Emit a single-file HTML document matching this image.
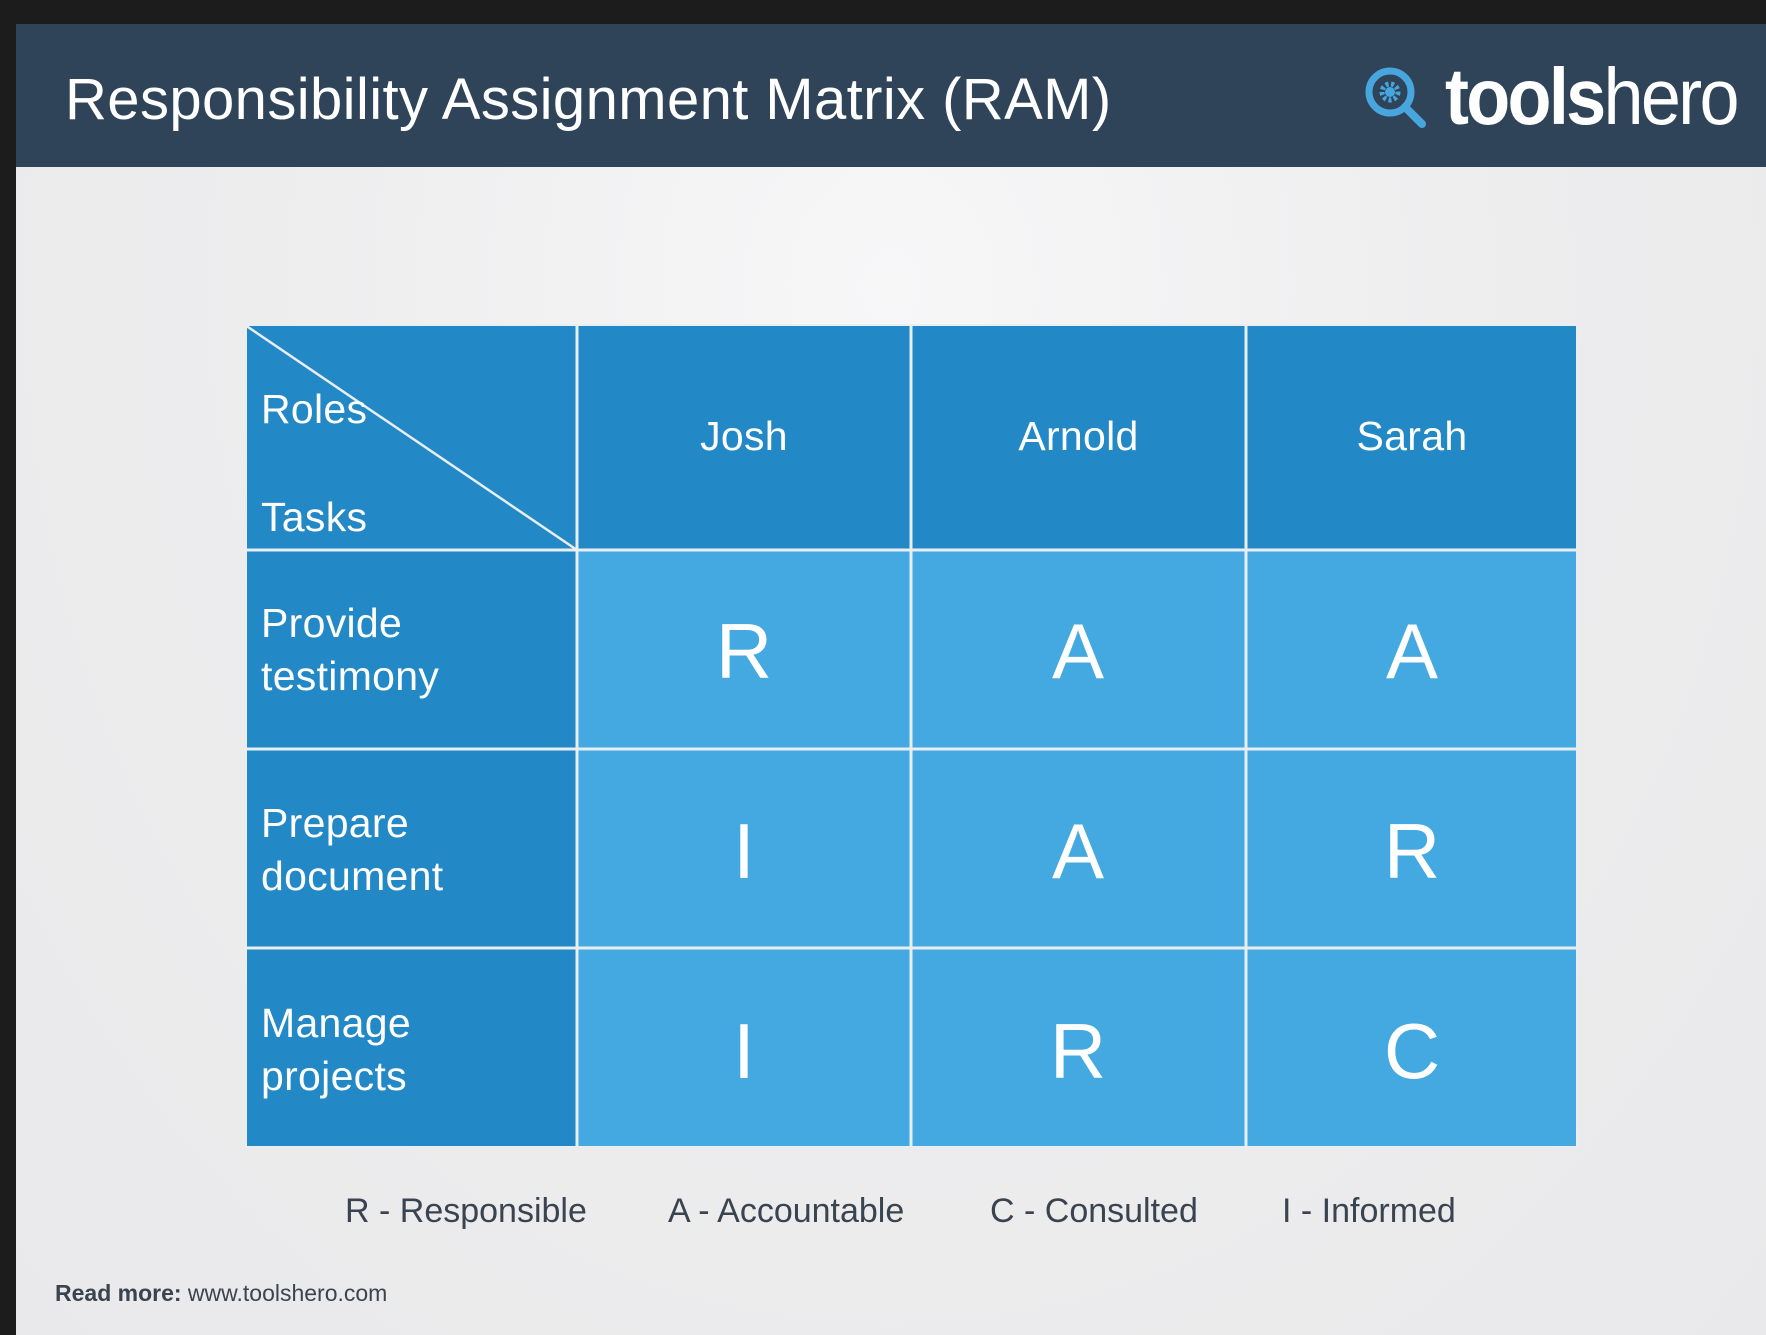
<!DOCTYPE html>
<html><head><meta charset="utf-8"><style>
*{margin:0;padding:0;box-sizing:border-box}
body{width:1766px;height:1335px;overflow:hidden;background:#1c1c1c;font-family:"Liberation Sans",Arial,sans-serif;position:relative}
.page{position:absolute;left:16px;top:24px;right:0;bottom:0;background:radial-gradient(ellipse at 50% 20%,#f7f7f8 0%,#ededee 50%,#e9e9eb 100%)}
.hdr{position:absolute;left:16px;top:24px;right:0;height:143px;background:#2f4459}
.title{position:absolute;left:65px;top:66px;color:#fff;font-size:58px;white-space:nowrap;letter-spacing:0.4px}
.logo{position:absolute;left:1445px;top:57px;color:#fff;font-size:80px;line-height:1;letter-spacing:-3px;white-space:nowrap;transform:scaleX(0.9);transform-origin:left}
.logo b{font-weight:bold}
.t{position:absolute;font-size:41px;color:#fff;white-space:nowrap;letter-spacing:0.3px}
.big{position:absolute;font-size:78px;color:#fff;text-align:center;width:332px}
.lg{position:absolute;top:1192px;font-size:34px;color:#3a4350;white-space:nowrap}
</style></head><body>
<div class="page"></div>
<div class="hdr"></div>
<div class="title">Responsibility Assignment Matrix (RAM)</div>
<svg style="position:absolute;left:1362px;top:64px" width="68" height="68" viewBox="0 0 68 68">
<circle cx="28" cy="28" r="21" fill="none" stroke="#48a6de" stroke-width="7"/>
<line x1="43" y1="43" x2="60" y2="60" stroke="#48a6de" stroke-width="8" stroke-linecap="round"/>
<circle cx="28" cy="28" r="8" fill="none" stroke="#48a6de" stroke-width="5" stroke-dasharray="3 2.5"/>
<circle cx="28" cy="28" r="5" fill="#48a6de"/>
</svg>
<div class="logo"><b>tools</b>hero</div>
<svg style="position:absolute;left:245px;top:324px" width="1333" height="824">
<rect x="0" y="0" width="1333" height="824" fill="#2288c6"/>
<rect x="332" y="226" width="1001" height="598" fill="#45a9e1"/>
<g stroke="#e8eef3" stroke-width="3">
<line x1="332" y1="0" x2="332" y2="824"/>
<line x1="666" y1="0" x2="666" y2="824"/>
<line x1="1001" y1="0" x2="1001" y2="824"/>
<line x1="0" y1="226" x2="1333" y2="226"/>
<line x1="0" y1="425" x2="1333" y2="425"/>
<line x1="0" y1="624" x2="1333" y2="624"/>
<line x1="0" y1="1" x2="332" y2="226" stroke-width="2.5"/>
<rect x="1" y="1" width="1331" height="822" fill="none" stroke-width="2"/>
</g>
</svg>
<div class="t" style="left:261px;top:386px">Roles</div>
<div class="t" style="left:261px;top:494px">Tasks</div>
<div class="t" style="left:577px;top:413px;width:334px;text-align:center">Josh</div>
<div class="t" style="left:911px;top:413px;width:335px;text-align:center">Arnold</div>
<div class="t" style="left:1246px;top:413px;width:332px;text-align:center">Sarah</div>
<div class="t" style="left:261px;top:600px">Provide</div>
<div class="t" style="left:261px;top:653px">testimony</div>
<div class="t" style="left:261px;top:800px">Prepare</div>
<div class="t" style="left:261px;top:853px">document</div>
<div class="t" style="left:261px;top:1000px">Manage</div>
<div class="t" style="left:261px;top:1053px">projects</div>
<div class="big" style="left:578px;top:606px">R</div>
<div class="big" style="left:912px;top:606px">A</div>
<div class="big" style="left:1246px;top:606px">A</div>
<div class="big" style="left:578px;top:806px">I</div>
<div class="big" style="left:912px;top:806px">A</div>
<div class="big" style="left:1246px;top:806px">R</div>
<div class="big" style="left:578px;top:1006px">I</div>
<div class="big" style="left:912px;top:1006px">R</div>
<div class="big" style="left:1246px;top:1006px">C</div>
<div class="lg" style="left:345px">R - Responsible</div>
<div class="lg" style="left:668px">A - Accountable</div>
<div class="lg" style="left:990px">C - Consulted</div>
<div class="lg" style="left:1282px">I - Informed</div>
<div style="position:absolute;left:55px;top:1280px;font-size:23px;color:#3a4350;white-space:nowrap"><b>Read more:</b> www.toolshero.com</div>
</body></html>
